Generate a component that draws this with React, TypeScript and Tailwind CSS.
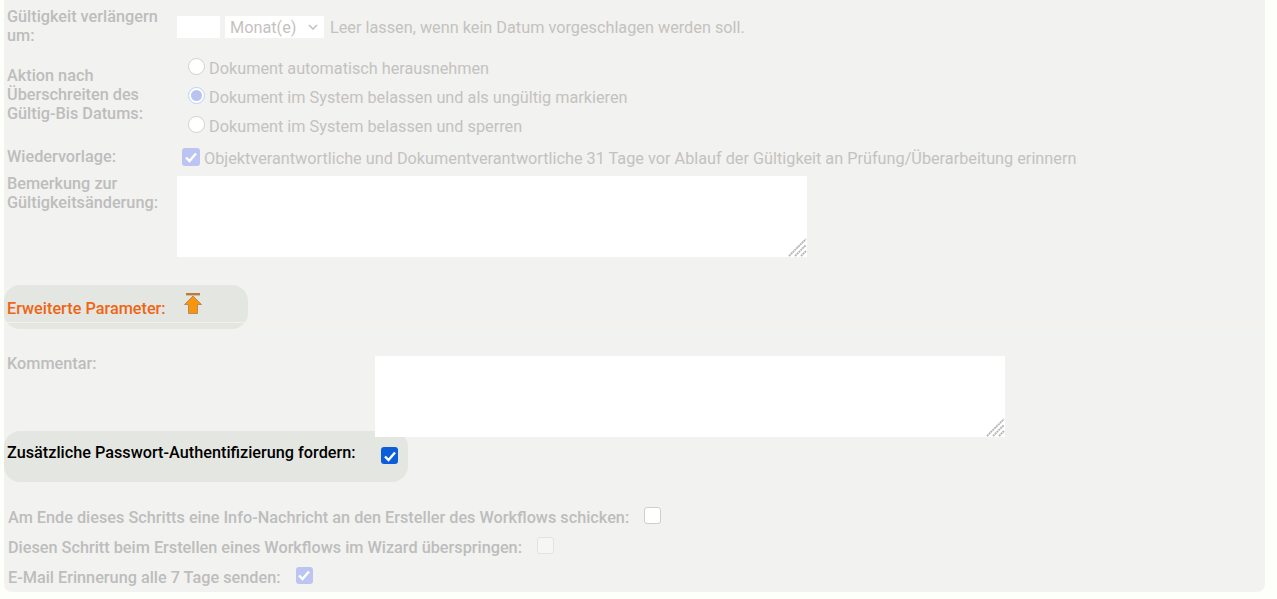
import React from "react";

const label = "text-[16.25px] leading-[19px] font-medium text-[#bdbdbd]";
const body = "text-[16.25px] leading-[19px] text-[#c4c2bf]";

function Radio({ checked = false }: { checked?: boolean }) {
  return checked ? (
    <span className="flex h-[17px] w-[17px] shrink-0 items-center justify-center rounded-full border border-[#bcd0fb] bg-white">
      <span className="h-[11px] w-[11px] rounded-full bg-[#b9c3ee]" />
    </span>
  ) : (
    <span className="h-[17px] w-[17px] shrink-0 rounded-full border border-[#d2d2d2] bg-white" />
  );
}

type Kind = "soft" | "softBig" | "solid" | "empty" | "disabled";

function Check({ kind }: { kind: Kind }) {
  const cls: Record<Kind, string> = {
    soft: "h-[17px] w-[17px] bg-[#bcc5f2]",
    softBig: "h-[18px] w-[18px] bg-[#bcc5f2]",
    solid: "h-[17px] w-[17px] bg-[#0b5ed7]",
    empty: "h-[17px] w-[17px] border border-[#cfcfcf] bg-white",
    disabled: "h-[17px] w-[17px] border border-[#e3e3e1] bg-[#f6f6f4]",
  };
  return (
    <span className={`flex shrink-0 items-center justify-center rounded-[3px] ${cls[kind]}`}>
      {(kind === "soft" || kind === "softBig" || kind === "solid") && (
        <svg width="14" height="14" viewBox="0 0 14 14" fill="none" stroke="white" strokeWidth="2.4">
          <path d="M2 7.5 L5.5 11 L12 3.5" />
        </svg>
      )}
    </span>
  );
}

function ArrowUp() {
  return (
    <svg width="20" height="23" viewBox="0 0 20 23">
      <rect x="3" y="1" width="14" height="2.4" fill="#bd7a3f" />
      <path d="M10 4 L18.5 12.5 H14.5 V21.5 H5.5 V12.5 H1.5 Z" fill="#f7960c" stroke="#b98a55" strokeWidth="1" />
    </svg>
  );
}

function Area() {
  return (
    <div className="relative h-[81px] w-[630px] bg-white">
      <svg className="absolute bottom-0 right-0" width="19" height="19" viewBox="0 0 19 19" stroke="#b4b4b4" strokeWidth="1.8" strokeDasharray="2 0.6">
        <path d="M1 18 L18 1" />
        <path d="M7 18 L18 7" />
        <path d="M13 18 L18 13" />
      </svg>
    </div>
  );
}

export default function App() {
  return (
    <div className="h-[599px] w-[1277px] overflow-hidden bg-[#fdfffb] font-['Roboto',sans-serif]">
      <div className="ml-1 flex h-[592px] w-[1261px] flex-col rounded-b-lg bg-[#f2f2f0]">
        {/* Gültigkeit */}
        <div className="flex h-[58px] pl-[3px] pt-[7px]">
          <div className={`w-[170px] ${label}`}>Gültigkeit verlängern um:</div>
          <div className="mt-[9px] flex h-[22px] items-center">
            <div className="h-[22px] w-[43px] bg-white" />
            <div className={`ml-[5px] flex h-[22px] w-[99px] items-center justify-between bg-white pl-[5px] pr-[6px] ${body}`}>
              <span>Monat(e)</span>
              <svg width="10" height="6" viewBox="0 0 10 6" fill="none" stroke="#c4c2bf" strokeWidth="1.6">
                <path d="M1 1 L5 5 L9 1" />
              </svg>
            </div>
            <span className={`ml-[6px] ${body}`}>Leer lassen, wenn kein Datum vorgeschlagen werden soll.</span>
          </div>
        </div>

        {/* Aktion */}
        <div className="flex h-[87px] pl-[3px]">
          <div className={`w-[170px] pt-[8px] ${label}`}>
            Aktion nach
            <br />
            Überschreiten des
            <br />
            Gültig-Bis Datums:
          </div>
          <div className="flex flex-col gap-[12px] pl-[11px]">
            {["Dokument automatisch herausnehmen", "Dokument im System belassen und als ungültig markieren", "Dokument im System belassen und sperren"].map((t, i) => (
              <div key={t} className="flex h-[17px] items-center gap-[4px]">
                <Radio checked={i === 1} />
                <span className={`pt-[3px] ${body}`}>{t}</span>
              </div>
            ))}
          </div>
        </div>

        {/* Wiedervorlage */}
        <div className="flex h-[29px] items-start pl-[3px]">
          <div className={`w-[175px] pt-[2px] ${label}`}>Wiedervorlage:</div>
          <span className="mt-[3px]">
            <Check kind="softBig" />
          </span>
          <span className={`ml-[4px] mt-[4px] ${body}`}>
            Objektverantwortliche und Dokumentverantwortliche 31 Tage vor Ablauf der Gültigkeit an Prüfung/Überarbeitung erinnern
          </span>
        </div>

        {/* Bemerkung */}
        <div className="flex pl-[3px]">
          <div className={`w-[170px] ${label}`}>
            Bemerkung zur
            <br />
            Gültigkeitsänderung:
          </div>
          <div className="mt-[2px]">
            <Area />
          </div>
        </div>

        {/* Erweiterte */}
        <div className="mt-[28px] flex h-[44px] w-[244px] rounded-2xl bg-[#e4e6e1] pl-[3px]">
          <span className="mt-[14px] text-[16.25px] leading-[19px] font-medium text-[#ef6514]">Erweiterte Parameter:</span>
          <span className="ml-[17px] mt-[7px]">
            <ArrowUp />
          </span>
        </div>
        <div className="-mt-[7px] h-px bg-[#f9f1df]" />

        {/* Kommentar */}
        <div className="relative z-10 mt-[33px] flex h-[75px] pl-[3px]">
          <div className={`-mt-[2px] w-[368px] ${label}`}>Kommentar:</div>
          <Area />
        </div>

        {/* Passwort */}
        <div className="flex h-[51px] w-[404px] items-start rounded-2xl bg-[#e4e6e1] pl-[3px] pt-[12px]">
          <span className="w-[374px] text-[16.25px] leading-[19px] font-medium text-black">
            Zusätzliche Passwort-Authentifizierung fordern:
          </span>
          <span className="mt-[4px]">
            <Check kind="solid" />
          </span>
        </div>

        {/* Bottom */}
        <div className="mt-[20px] flex flex-col pl-[4px]">
          {[
            { t: "Am Ende dieses Schritts eine Info-Nachricht an den Ersteller des Workflows schicken:", k: "empty" as Kind },
            { t: "Diesen Schritt beim Erstellen eines Workflows im Wizard überspringen:", k: "disabled" as Kind },
            { t: "E-Mail Erinnerung alle 7 Tage senden:", k: "soft" as Kind },
          ].map((r) => (
            <div key={r.t} className="flex h-[30px] items-center gap-[15px]">
              <span className={label}>{r.t}</span>
              <span className="-mt-[4px] flex">
                <Check kind={r.k} />
              </span>
            </div>
          ))}
        </div>
      </div>
    </div>
  );
}
